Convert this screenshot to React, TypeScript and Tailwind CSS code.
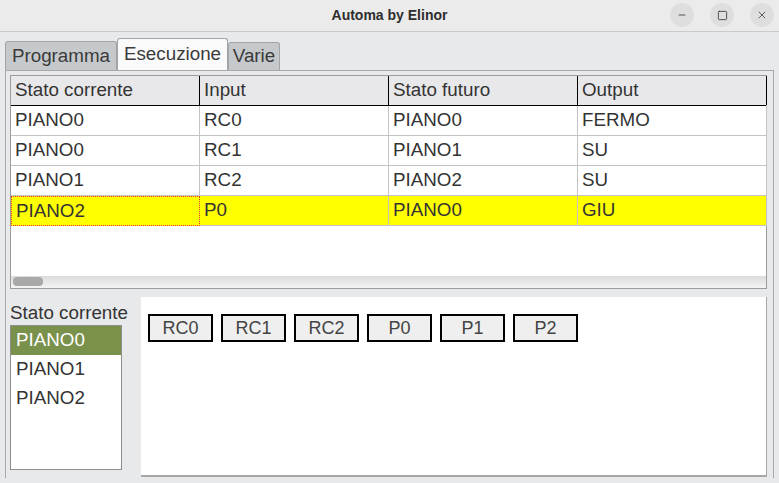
import { Minus, Square, X } from "lucide-react";

const columns = ["Stato corrente", "Input", "Stato futuro", "Output"];

const rows = [
  ["PIANO0", "RC0", "PIANO0", "FERMO"],
  ["PIANO0", "RC1", "PIANO1", "SU"],
  ["PIANO1", "RC2", "PIANO2", "SU"],
  ["PIANO2", "P0", "PIANO0", "GIU"],
];

const states = ["PIANO0", "PIANO1", "PIANO2"];
const inputs = ["RC0", "RC1", "RC2", "P0", "P1", "P2"];

function TitleBar() {
  return (
    <div className="relative flex h-[32px] items-center justify-center border-b border-[#c9c9c9] bg-[#ebebeb]">
      <span className="text-[14px] font-bold text-[#2e2e2e]">Automa by Elinor</span>
      <div className="absolute right-[5px] top-[3px] flex gap-[16px]">
        <div className="flex h-[24px] w-[24px] items-end justify-center rounded-full bg-[#dedede] pb-[7px]">
          <Minus className="h-[10px] w-[10px] text-[#333]" strokeWidth={2} />
        </div>
        <div className="flex h-[24px] w-[24px] items-center justify-center rounded-full bg-[#dedede]">
          <Square className="h-[11px] w-[11px] text-[#333]" strokeWidth={1.8} />
        </div>
        <div className="flex h-[24px] w-[24px] items-center justify-center rounded-full bg-[#dedede]">
          <X className="h-[12px] w-[12px] text-[#333]" strokeWidth={1.5} />
        </div>
      </div>
    </div>
  );
}

function Tabs() {
  return (
    <div className="flex h-[30px] items-end pl-[5px] text-[#3a3a3a]">
      <div className="flex h-[29px] w-[112px] items-center justify-center rounded-t-[3px] border border-b-0 border-[#a2a5a8] bg-[#c6c9cc]">
        Programma
      </div>
      <div className="flex h-[32px] w-[111px] items-center justify-center rounded-t-[3px] border border-b-0 border-[#a2a5a8] bg-[#fafafa]">
        Esecuzione
      </div>
      <div className="flex h-[28px] w-[52px] items-center justify-center rounded-t-[3px] border border-b-0 border-[#a2a5a8] bg-[#c6c9cc]">
        Varie
      </div>
    </div>
  );
}

function StateTable() {
  return (
    <div className="flex h-[214px] flex-col border border-[#9c9c9c] bg-white">
      <div className="grid grid-cols-[189px_189px_189px_189px] border-b border-black bg-[#e8e8ea]">
        {columns.map((c) => (
          <div key={c} className="flex h-[29px] items-center border-r border-black pl-[4px]">
            {c}
          </div>
        ))}
      </div>
      {rows.map((r, i) => {
        const active = i === 3;
        return (
          <div
            key={i}
            className={`grid grid-cols-[189px_189px_189px_189px] ${active ? "bg-[#ffff00]" : "bg-white"}`}
          >
            {r.map((cell, j) => (
              <div
                key={j}
                className={`flex h-[30px] items-center pl-[4px] ${
                  active && j === 0
                    ? "border border-dotted border-[#e03030]"
                    : "border-b border-r border-[#c4c4c4]"
                }`}
              >
                {cell}
              </div>
            ))}
          </div>
        );
      })}
      <div className="flex-1" />
      <div className="h-[12px] bg-gradient-to-b from-[#dcdcdc] to-[#f4f4f4] pl-[2px] pt-[1px]">
        <div className="h-[9px] w-[30px] rounded-[4px] bg-[#a9a9a9]" />
      </div>
    </div>
  );
}

function BottomArea() {
  return (
    <div className="mt-[8px] flex h-[180px] gap-[19px]">
      <div className="flex w-[112px] flex-col pt-[2px]">
        <div className="h-[26px] whitespace-nowrap">Stato corrente</div>
        <div className="h-[145px] border border-[#8e8e8e] bg-white">
          {states.map((s, i) => (
            <div
              key={s}
              className={`flex h-[29px] items-center pl-[5px] ${i === 0 ? "bg-[#7a914c] text-white" : ""}`}
            >
              {s}
            </div>
          ))}
        </div>
      </div>
      <div className="flex flex-1 items-start gap-[8px] border-b-2 border-r border-[#a6a6a6] bg-white pl-[7px] pt-[17px]">
        {inputs.map((b) => (
          <div
            key={b}
            className="flex h-[28px] w-[65px] items-center justify-center border-2 border-black bg-[#efefef] text-[18px] text-[#444]"
          >
            {b}
          </div>
        ))}
      </div>
    </div>
  );
}

export default function App() {
  return (
    <div
      className="flex h-[483px] w-[779px] flex-col overflow-hidden bg-[#e8e9eb] text-[18.8px] text-[#333]"
      style={{ fontFamily: '"Liberation Sans", Arial, sans-serif' }}
    >
      <TitleBar />
      <div className="pt-[8px]">
        <Tabs />
      </div>
      <div className="mx-[5px] flex h-[408px] flex-col border-l border-r border-t border-[#a8a8a8] pl-[4px] pr-[6px] pt-[4px]">
        <StateTable />
        <BottomArea />
      </div>
    </div>
  );
}
